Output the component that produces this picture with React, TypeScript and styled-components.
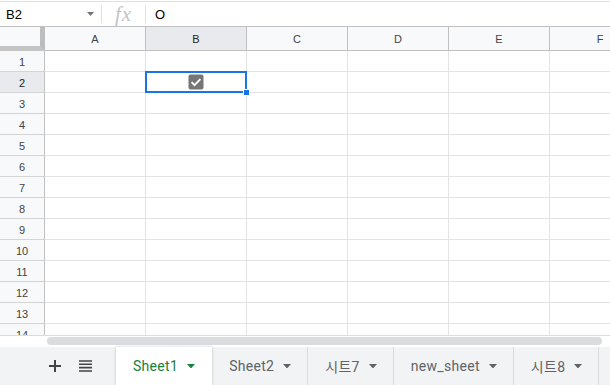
import React from 'react'
import styled, { createGlobalStyle } from 'styled-components'

const GlobalStyle = createGlobalStyle`
  body {
    margin: 0;
    background: #fff;
    font-family: Roboto, "Liberation Sans", Arial, sans-serif;
    overflow: hidden;
  }
  * { box-sizing: border-box; }
`

const COLS = ['A', 'B', 'C', 'D', 'E', 'F']
const ROWS = Array.from({ length: 14 }, (_, i) => i + 1)
const TABS = ['Sheet1', 'Sheet2', '시트7', 'new_sheet', '시트8']

const Page = styled.div`
  width: 610px;
  height: 385px;
  display: flex;
  flex-direction: column;
  overflow: hidden;
`

const FormulaBar = styled.div`
  margin-top: 1px;
  height: 26px;
  border-top: 1px solid #e0e0e0;
  border-bottom: 1px solid #c0c0c0;
  display: flex;
  align-items: center;
`

const NameBox = styled.div`
  width: 101px;
  padding: 0 7px 0 6px;
  display: flex;
  align-items: center;
  justify-content: space-between;
  font: normal 13px "Liberation Sans", Arial, sans-serif;
  color: #000;
`

const Divider = styled.div`
  width: 1px;
  height: 18px;
  background: #e0e0e0;
`

const FxBox = styled.div`
  width: 43px;
  text-align: center;
  font: italic 21px/20px "Liberation Serif", "Times New Roman", serif;
  color: #c4c4c4;
  letter-spacing: 1px;
`

const FormulaText = styled.div`
  padding-left: 9px;
  font: normal 13px "Liberation Sans", Arial, sans-serif;
  color: #000;
`

const Grid = styled.div`
  height: 308px;
  overflow: hidden;
  display: grid;
  grid-template-columns: 45px repeat(6, 101px);
  grid-template-rows: 24px;
  grid-auto-rows: 21px;
`

const Corner = styled.div`
  background: #f8f9fa;
  border-right: 5px solid #bdbdbd;
  border-bottom: 5px solid #c4c4c4;
`

const Header = styled.div<{ $selected?: boolean; $row?: boolean }>`
  background: ${p => (p.$selected ? '#e8eaed' : '#f8f9fa')};
  border-right: 1px solid #c0c0c0;
  border-bottom: 1px solid ${p => (p.$row ? '#d4d4d4' : '#c0c0c0')};
  display: flex;
  align-items: center;
  justify-content: center;
  font: normal 11px "Liberation Sans", Arial, sans-serif;
  color: ${p => (p.$selected ? '#222' : '#444')};
  padding-top: 1px;
`

const Cell = styled.div<{ $active?: boolean }>`
  position: relative;
  z-index: ${p => (p.$active ? 2 : 0)};
  border-right: 1px solid #e2e3e3;
  border-bottom: 1px solid #e2e3e3;
  display: flex;
  align-items: center;
  justify-content: center;
`

const Selection = styled.div`
  position: absolute;
  top: -1px;
  left: -1px;
  right: -1px;
  bottom: -1px;
  border: 2px solid #1a73e8;
  pointer-events: none;
`

const Handle = styled.div`
  position: absolute;
  right: -5px;
  bottom: -5px;
  width: 7px;
  height: 7px;
  background: #1a73e8;
  border: 1px solid #fff;
`

const ScrollArea = styled.div`
  height: 12px;
  border-top: 1px solid #dadce0;
  padding: 1px 8px 0 47px;
  background: #fff;
`

const Thumb = styled.div`
  height: 8px;
  border-radius: 4px;
  background: #dadce0;
`

const TabBar = styled.div`
  flex: 1;
  background: #f1f3f4;
  display: flex;
  align-items: stretch;
  padding-left: 40px;
`

const IconButton = styled.div`
  width: 30px;
  display: flex;
  align-items: center;
  justify-content: center;
  color: #444;
`

const Spacer = styled.div`
  width: 16px;
`

const Tab = styled.div<{ $active?: boolean }>`
  display: flex;
  align-items: center;
  gap: 9px;
  padding: 0 16px 0 17px;
  background: ${p => (p.$active ? '#fff' : 'transparent')};
  box-shadow: ${p => (p.$active ? '0 0 3px rgba(60,64,67,0.25)' : 'none')};
  border-right: 1px solid ${p => (p.$active ? 'transparent' : '#dadce0')};
  color: ${p => (p.$active ? '#188038' : '#5f6368')};
  font: 400 14px Roboto, "Noto Sans CJK KR", "Liberation Sans", sans-serif;
  letter-spacing: 0.3px;
  white-space: nowrap;
`

const Caret = ({ color, size = 9 }: { color: string; size?: number }) => (
  <svg width={size} height={size / 2 + 0.5} viewBox="0 0 9 5">
    <path d="M0 0h9L4.5 5z" fill={color} />
  </svg>
)

const Checkbox = () => (
  <svg width="16" height="16" viewBox="0 0 16 16">
    <rect x="0.5" y="0.5" width="15" height="15" rx="2" fill="#767676" />
    <path d="M3.6 8.2l2.9 2.9 5.9-5.9" stroke="#fff" strokeWidth="1.9" fill="none" />
  </svg>
)

const App: React.FC = () => {
  return (
    <Page>
      <GlobalStyle />
      <FormulaBar>
        <NameBox>
          <span>B2</span>
          <Caret color="#757575" size={7} />
        </NameBox>
        <Divider />
        <FxBox>fx</FxBox>
        <Divider />
        <FormulaText>O</FormulaText>
      </FormulaBar>
      <Grid>
        <Corner />
        {COLS.map(c => (
          <Header key={c} $selected={c === 'B'}>{c}</Header>
        ))}
        {ROWS.map(r => (
          <React.Fragment key={r}>
            <Header $row $selected={r === 2}>{r}</Header>
            {COLS.map(c => {
              const active = r === 2 && c === 'B'
              return (
                <Cell key={c} $active={active}>
                  {active && (
                    <>
                      <Checkbox />
                      <Selection>
                        <Handle />
                      </Selection>
                    </>
                  )}
                </Cell>
              )
            })}
          </React.Fragment>
        ))}
      </Grid>
      <ScrollArea>
        <Thumb />
      </ScrollArea>
      <TabBar>
        <IconButton>
          <svg width="12" height="12" viewBox="0 0 12 12">
            <path d="M6 0v12M0 6h12" stroke="#444" strokeWidth="2" />
          </svg>
        </IconButton>
        <IconButton>
          <svg width="13" height="12" viewBox="0 0 13 12">
            <path d="M0 1h13M0 4.3h13M0 7.6h13M0 11h13" stroke="#444" strokeWidth="1.6" />
          </svg>
        </IconButton>
        <Spacer />
        {TABS.map((t, i) => (
          <Tab key={t} $active={i === 0}>
            {t}
            <Caret color={i === 0 ? '#188038' : '#5f6368'} size={8} />
          </Tab>
        ))}
      </TabBar>
    </Page>
  )
}

export default App
